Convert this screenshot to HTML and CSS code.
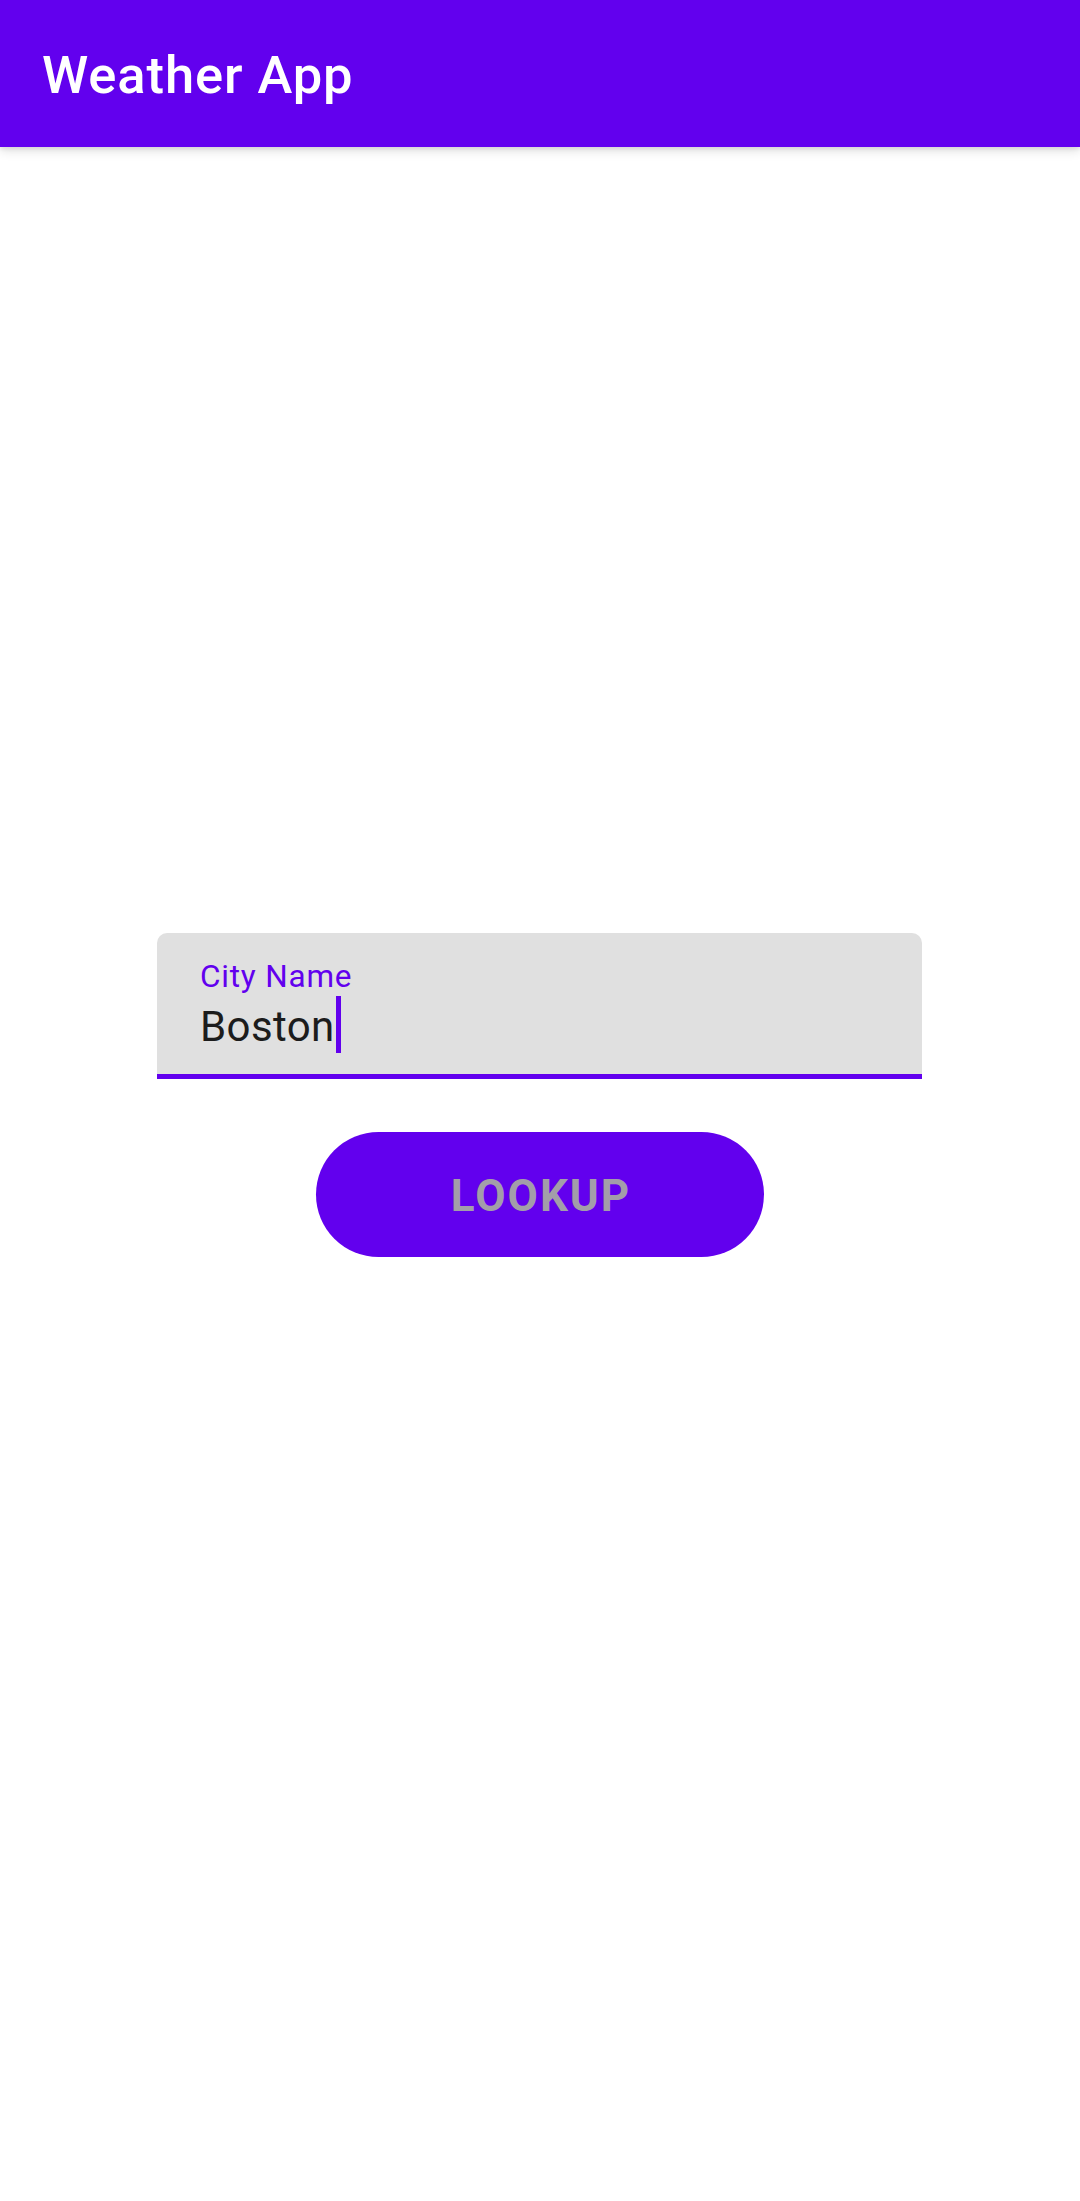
FILE: index.html
```html
<!DOCTYPE html>
<html lang="en">
<head>
<meta charset="utf-8">
<title>Weather App</title>
<link rel="stylesheet" href="styles.css">
</head>
<body>
<header class="app-bar">
  <h1 class="app-title">Weather App</h1>
</header>
<main class="content">
  <div class="text-field">
    <div class="field-label">City Name</div>
    <div class="field-input">Boston<span class="cursor"></span></div>
  </div>
  <button class="lookup-btn" type="button">LOOKUP</button>
</main>
</body>
</html>
```
FILE: styles.css
```css
html, body {
  margin: 0;
  padding: 0;
  background: #ffffff;
  font-family: Roboto, "Noto Sans", "Liberation Sans", sans-serif;
}

.app-bar {
  height: 147px;
  background: #6200ee;
  display: flex;
  align-items: center;
  padding-left: 42px;
  box-shadow: 0 4px 10px rgba(0, 0, 0, 0.12), 0 2px 4px rgba(0, 0, 0, 0.08);
  position: relative;
  z-index: 1;
}

.app-title {
  margin: 0;
  color: #ffffff;
  font-size: 52.5px;
  font-weight: 500;
  letter-spacing: 0.9px;
  line-height: 60px;
  margin-top: 2px;
}

.content {
  display: flex;
  flex-direction: column;
  align-items: center;
  padding-top: 786px;
}

.text-field {
  box-sizing: border-box;
  width: 765px;
  margin-left: -1px;
  background: #e0e0e0;
  border-radius: 10px 10px 0 0;
  border-bottom: 5px solid #6200ee;
  padding: 25px 44px 21px 43px;
}

.field-label {
  color: #6200ee;
  font-size: 31.5px;
  letter-spacing: 0.8px;
  line-height: 37px;
}

.field-input {
  margin-top: 7px;
  color: #1c1c1c;
  font-size: 42px;
  letter-spacing: 0.4px;
  line-height: 49px;
}

.cursor {
  display: inline-block;
  width: 5px;
  height: 57px;
  margin-top: -8px;
  margin-left: 1px;
  vertical-align: -12px;
  background: #6200ee;
}

.lookup-btn {
  margin-top: 53px;
  width: 448px;
  height: 125px;
  border: none;
  border-radius: 63px;
  background: #6200ee;
  color: #a39ea9;
  font-family: Roboto, "Noto Sans", "Liberation Sans", sans-serif;
  font-size: 44px;
  font-weight: 700;
  letter-spacing: 2px;
  padding: 2px 0 0 2px;
  display: flex;
  align-items: center;
  justify-content: center;
}
```
